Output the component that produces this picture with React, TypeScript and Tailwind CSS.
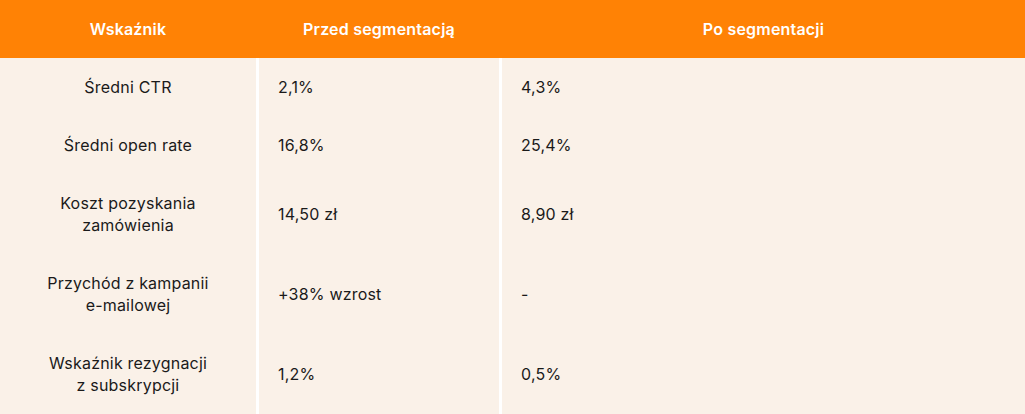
export default function App() {
  const rows = [
    { label: ['Średni CTR'], before: '2,1%', after: '4,3%' },
    { label: ['Średni open rate'], before: '16,8%', after: '25,4%' },
    { label: ['Koszt pozyskania', 'zamówienia'], before: '14,50 zł', after: '8,90 zł' },
    { label: ['Przychód z kampanii', 'e-mailowej'], before: '+38% wzrost', after: '-' },
    { label: ['Wskaźnik rezygnacji', 'z subskrypcji'], before: '1,2%', after: '0,5%' },
  ];

  return (
    <div className="w-[1025px] h-[414px] bg-white font-['Inter',sans-serif] text-[16px] leading-[22px] tracking-[0.2px] text-[#1a1a1a]">
      {/* Header */}
      <div className="grid grid-cols-[256px_240px_1fr] gap-x-[3px] bg-[#ff8205] h-[58px] items-center text-white font-semibold">
        <div className="text-center">Wskaźnik</div>
        <div className="text-center">Przed segmentacją</div>
        <div className="text-center">Po segmentacji</div>
      </div>

      {/* Body */}
      {rows.map((row, i) => (
        <div key={i} className="grid grid-cols-[256px_240px_1fr] gap-x-[3px] bg-white">
          <div className="bg-[#faf1e8] py-[18px] px-4 text-center flex flex-col justify-center">
            {row.label.map((line, j) => (
              <span key={j}>{line}</span>
            ))}
          </div>
          <div className="bg-[#faf1e8] py-[18px] pl-[19px] flex items-center">{row.before}</div>
          <div className="bg-[#faf1e8] py-[18px] pl-[19px] flex items-center">{row.after}</div>
        </div>
      ))}
    </div>
  );
}
